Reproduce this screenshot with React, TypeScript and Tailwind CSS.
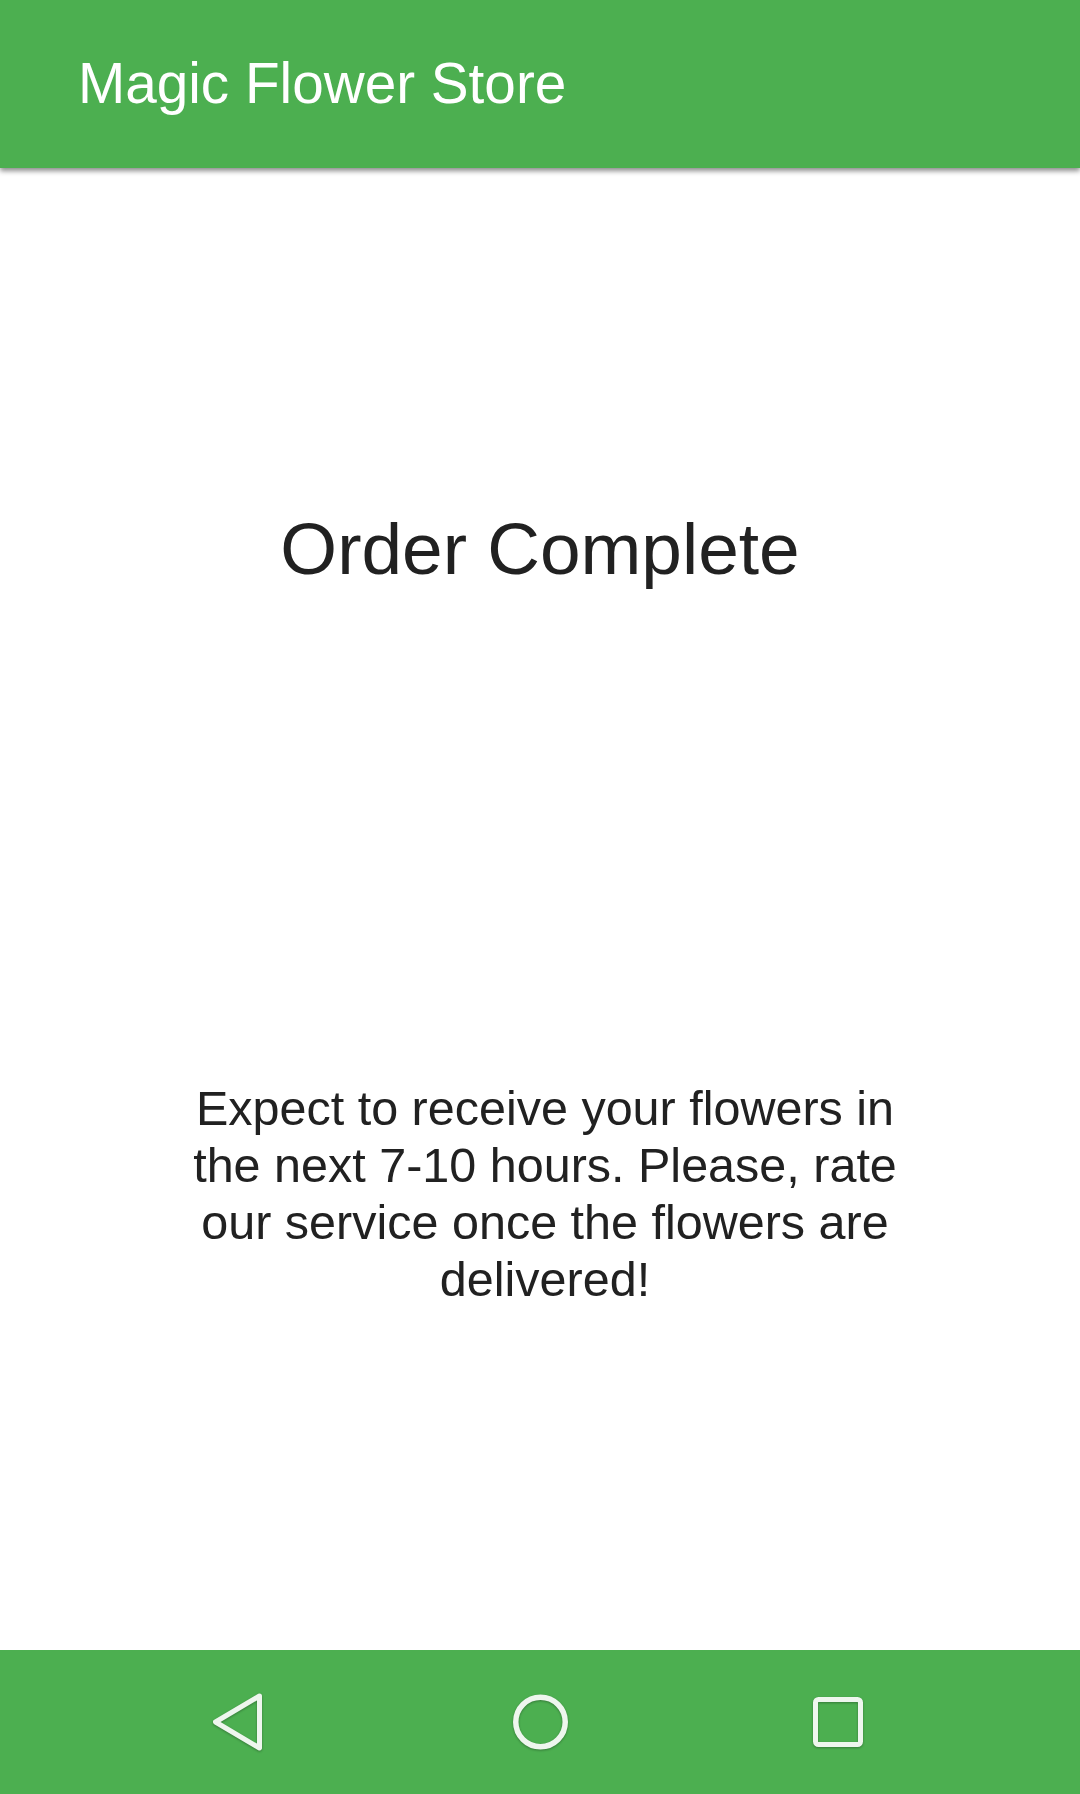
import React from 'react'

const FONT = { fontFamily: '"Liberation Sans", Arial, Helvetica, sans-serif' }

function NavBack() {
  return (
    <svg width="60" height="60" viewBox="0 0 60 60" className="drop-shadow-[0_1px_1px_rgba(0,0,0,0.3)]">
      <path
        d="M49.5 4 L5.5 30 L49.5 56 Z"
        fill="none"
        stroke="#eef6ee"
        strokeWidth="5"
        strokeLinejoin="round"
      />
    </svg>
  )
}

function NavHome() {
  return (
    <svg width="60" height="60" viewBox="0 0 60 60" className="drop-shadow-[0_1px_1px_rgba(0,0,0,0.3)]">
      <circle cx="30.5" cy="30" r="24.75" fill="none" stroke="#eef6ee" strokeWidth="5.5" />
    </svg>
  )
}

function NavRecents() {
  return (
    <svg width="60" height="60" viewBox="0 0 60 60" className="drop-shadow-[0_1px_1px_rgba(0,0,0,0.3)]">
      <rect x="5.5" y="7.5" width="45" height="45" rx="3" fill="none" stroke="#eef6ee" strokeWidth="5" />
    </svg>
  )
}

export default function App() {
  return (
    <div className="flex h-[1794px] w-[1080px] flex-col bg-white" style={FONT}>
      {/* app bar */}
      <header className="relative z-10 flex h-[168px] shrink-0 items-center bg-[#4caf50] pl-[78px] shadow-[0_3px_5px_rgba(0,0,0,0.45)]">
        <h1 className="text-[56.7px] leading-[64px] font-normal text-white">Magic Flower Store</h1>
      </header>

      {/* content */}
      <main className="flex flex-1 flex-col items-center">
        <h2 className="mt-[341px] text-[73px] leading-[80px] font-normal text-[#212121]">Order Complete</h2>
        <div className="mt-[491px] flex w-full justify-center pl-[10px]">
          <p className="w-[736px] text-center text-[48.5px] leading-[57px] text-[#212121]">
            Expect to receive your flowers in the next 7-10 hours. Please, rate our service once the flowers are
            delivered!
          </p>
        </div>
      </main>

      {/* system nav */}
      <nav className="flex h-[144px] shrink-0 items-center justify-center gap-[240px] bg-[#4caf50]">
        <NavBack />
        <NavHome />
        <NavRecents />
      </nav>
    </div>
  )
}
